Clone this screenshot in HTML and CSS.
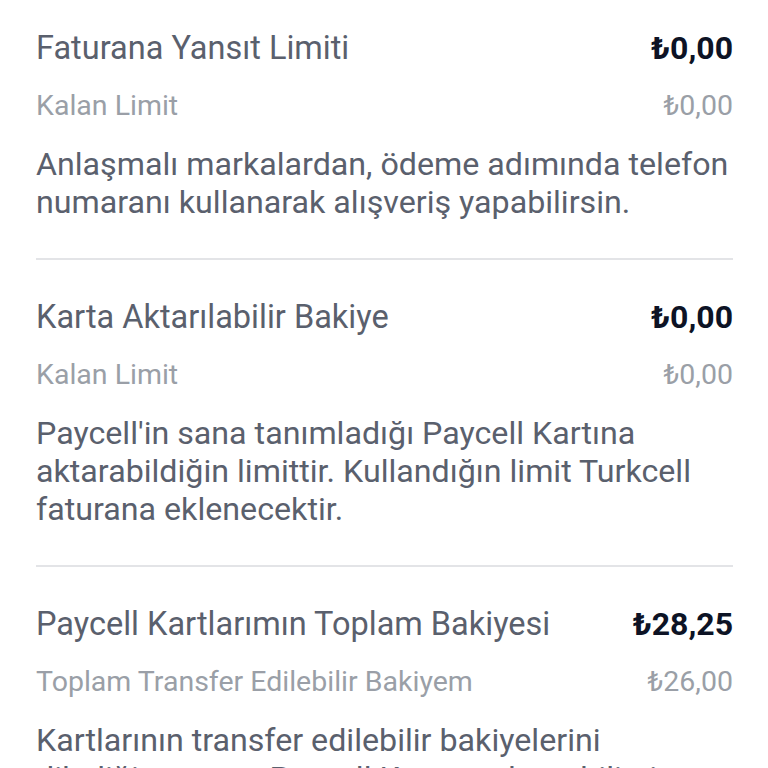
FILE: index.html
```html
<!DOCTYPE html>
<html lang="tr">
<head>
<meta charset="utf-8">
<title>Limitler</title>
<link rel="stylesheet" href="styles.css">
</head>
<body>
<main class="page">
  <section class="card card-first">
    <div class="row">
      <span class="title">Faturana Yansıt Limiti</span>
      <span class="amount">₺0,00</span>
    </div>
    <div class="row sub-row">
      <span class="sub">Kalan Limit</span>
      <span class="sub-amount">₺0,00</span>
    </div>
    <p class="desc">Anlaşmalı markalardan, ödeme adımında telefon numaranı kullanarak alışveriş yapabilirsin.</p>
  </section>
  <section class="card">
    <div class="row">
      <span class="title">Karta Aktarılabilir Bakiye</span>
      <span class="amount">₺0,00</span>
    </div>
    <div class="row sub-row">
      <span class="sub">Kalan Limit</span>
      <span class="sub-amount">₺0,00</span>
    </div>
    <p class="desc">Paycell'in sana tanımladığı Paycell Kartına aktarabildiğin limittir. Kullandığın limit Turkcell faturana eklenecektir.</p>
  </section>
  <section class="card card-last">
    <div class="row">
      <span class="title">Paycell Kartlarımın Toplam Bakiyesi</span>
      <span class="amount">₺28,25</span>
    </div>
    <div class="row sub-row">
      <span class="sub">Toplam Transfer Edilebilir Bakiyem</span>
      <span class="sub-amount">₺26,00</span>
    </div>
    <p class="desc">Kartlarının transfer edilebilir bakiyelerini<br>dilediğin zaman Paycell Kartına aktarabilirsin.</p>
  </section>
</main>
</body>
</html>
```

FILE: styles.css
```css
html, body {
  margin: 0;
  padding: 0;
  background: #ffffff;
}

body {
  font-family: Roboto, "Noto Sans", "DejaVu Sans", sans-serif;
  overflow: hidden;
  height: 768px;
}

.page {
  padding: 0 35px 0 36px;
}

.card {
  display: flex;
  flex-direction: column;
  padding: 37px 0 37px;
  border-bottom: 2px solid #e3e4e7;
}

.card-first {
  padding-top: 28px;
}

.card-last {
  border-bottom: none;
}

.row {
  display: flex;
  justify-content: space-between;
  align-items: baseline;
}

.title {
  font-size: 32.5px;
  line-height: 40px;
  color: #5a606d;
}

.amount {
  font-size: 32px;
  line-height: 40px;
  font-weight: 700;
  color: #0d1325;
}

.sub-row {
  margin-top: 21px;
}

.sub,
.sub-amount {
  font-size: 28.5px;
  line-height: 34px;
  color: #9a9fa7;
}

.desc {
  margin: 22px 0 0;
  font-size: 32.2px;
  line-height: 38px;
  color: #5a606d;
}
```
